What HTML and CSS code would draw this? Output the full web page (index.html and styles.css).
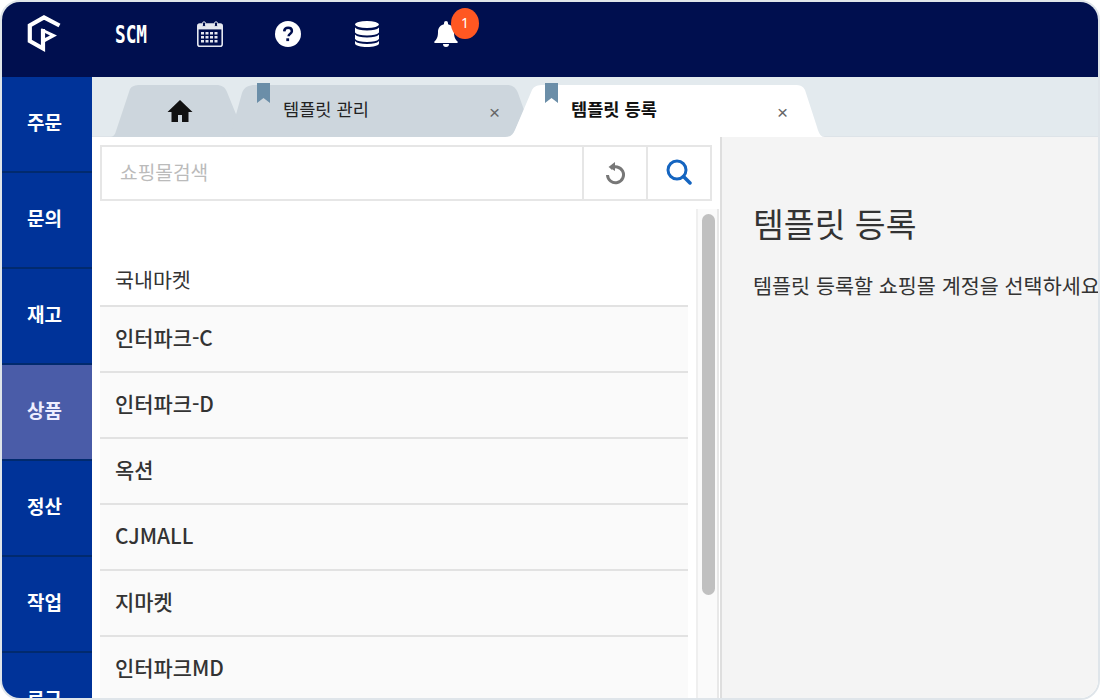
FILE: index.html
```html
<!DOCTYPE html>
<html lang="ko">
<head>
<meta charset="utf-8">
<title>템플릿 등록</title>
<link rel="stylesheet" href="styles.css">
</head>
<body>
<div class="app">
  <header class="topbar">
    <svg class="logo" viewBox="0 0 36 38" width="36" height="38"><path d="M33.500 10.500 18 2.500 3.800 10.500V26L17 33.500V14" fill="none" stroke="#fff" stroke-width="4.200"/><path d="M15 13 31 20.500 19 27V23l5-2.500-5-2.500z" fill="#fff"/></svg>
    <span class="scm">SCM</span>
    <svg class="ic-cal" viewBox="0 0 26 26" width="26" height="26"><rect x="0.800" y="3" width="24.400" height="22.200" rx="2" fill="none" stroke="#e4e7f0" stroke-width="1.600"/><rect x="1" y="3" width="24" height="5.400" fill="#e4e7f0"/><rect x="5.500" y="0.800" width="3" height="5" rx="1.500" fill="#000f4f" stroke="#e4e7f0"/><rect x="17.500" y="0.800" width="3" height="5" rx="1.500" fill="#000f4f" stroke="#e4e7f0"/><path d="M4 11h3v2.400H4zM8.500 11h3v2.400h-3zM13 11h3v2.400h-3zM17.500 11h3v2.400h-3zM4 15h3v2.400H4zM8.500 15h3v2.400h-3zM13 15h3v2.400h-3zM17.500 15h3v2.400h-3zM4 19h3v2.400H4zM8.500 19h3v2.400h-3zM13 19h3v2.400h-3zM17.500 19h3v2.400h-3z" fill="#e4e7f0"/></svg>
    <svg class="ic-help" viewBox="0 0 26 26" width="26" height="26"><circle cx="13" cy="13" r="13" fill="#fff"/><path d="M9.200 10.300c.2-2.200 1.800-3.500 3.900-3.500 2.200 0 3.800 1.300 3.800 3.200 0 1.500-.9 2.300-1.900 3-1 .7-1.400 1.100-1.400 2.300" fill="none" stroke="#000f4f" stroke-width="2.500"/><rect x="11.300" y="17.300" width="2.800" height="2.800" fill="#000f4f"/></svg>
    <svg class="ic-db" viewBox="0 0 24 26" width="24" height="26"><ellipse cx="12" cy="3.500" rx="12" ry="3.500" fill="#fff"/><path d="M0 6.500c2 2.200 6 3 12 3s10-.8 12-3v5c-2 2.200-6 3-12 3s-10-.8-12-3zM0 13.500c2 2.200 6 3 12 3s10-.8 12-3v4.500c-2 2.200-6 3-12 3s-10-.8-12-3z" fill="#fff"/><path d="M0 20c2 2.200 6 3 12 3s10-.8 12-3v2.500c0 2-6 3.500-12 3.500s-12-1.500-12-3.500z" fill="#fff"/></svg>
    <div class="bell">
      <svg viewBox="0 0 24 26" width="24" height="26"><path d="M12 0a2 2 0 0 1 2 2v1.200c3.800.8 6 3.800 6 7.800 0 5.500 1.500 7.500 3.500 9.500.6.600.3 1.500-.6 1.500H1.100c-.9 0-1.200-.9-.6-1.500C2.500 18.500 4 16.500 4 11c0-4 2.200-7 6-7.800V2a2 2 0 0 1 2-2zM9 23h6a3 3 0 0 1-6 0z" fill="#fff"/></svg>
      <span class="badge">1</span>
    </div>
  </header>
  <div class="body">
    <nav class="side">
      <a class="side-item">주문</a>
      <a class="side-item">문의</a>
      <a class="side-item">재고</a>
      <a class="side-item active">상품</a>
      <a class="side-item">정산</a>
      <a class="side-item">작업</a>
      <a class="side-item">로그</a>
    </nav>
    <div class="content">
      <div class="tabs">
        <div class="tab tab-home">
          <svg class="tab-bg" viewBox="0 0 132 60" preserveAspectRatio="none"><path d="M0 60C3 60 5 58 6 54L20 12C22 9 25 8 30 8H106C112 8 115 10 117 15L132 52V60Z" fill="#cdd6dd"/></svg>
          <svg class="home-ic" viewBox="0 0 26 24" width="26" height="24"><path d="M13 1 .500 13H4.500v10h6.500v-7h4v7h6.500V13h4z" fill="#111"/></svg>
        </div>
        <div class="tab tab-mid">
          <svg class="tab-bg" viewBox="0 0 302 60" preserveAspectRatio="none"><path d="M0 60C6 60 8 57 10 52L20 16C22 10 27 8 33 8H285C291 8 294 11 296 16L302 33 290 60Z" fill="#cdd6dd"/></svg>
          <svg class="mark" viewBox="0 0 13 20" width="13" height="20"><path d="M0 0h13v20l-6.500-5L0 20z" fill="#6b8ea8"/></svg>
          <span class="tab-label">템플릿 관리</span>
          <span class="tab-x">×</span>
        </div>
        <div class="tab tab-cur">
          <svg class="tab-bg" viewBox="0 0 320 60" preserveAspectRatio="none"><path d="M0 60C5 60 8 58 10 53L27 13C29 9 33 8 38 8H290C295 8 298 9 300 13L312 50C314 57 316 60 320 60Z" fill="#fff"/></svg>
          <svg class="mark" viewBox="0 0 13 20" width="13" height="20"><path d="M0 0h13v20l-6.500-5L0 20z" fill="#6b8ea8"/></svg>
          <span class="tab-label">템플릿 등록</span>
          <span class="tab-x">×</span>
        </div>
      </div>
      <div class="panes">
        <section class="left">
          <div class="search">
            <div class="search-input">쇼핑몰검색</div>
            <button class="search-btn">
              <svg viewBox="0 0 22 24" width="22" height="24"><path d="M6.500 7.500A8 8 0 1 1 3.500 14" fill="none" stroke="#777" stroke-width="3"/><path d="M11 1v9L4.500 6z" fill="#777"/></svg>
            </button>
            <button class="search-btn">
              <svg viewBox="0 0 26 26" width="26" height="26"><circle cx="11" cy="11" r="9" fill="none" stroke="#1565c0" stroke-width="3"/><path d="M17.500 17.500 24 24" stroke="#1565c0" stroke-width="3.500" stroke-linecap="round"/></svg>
            </button>
          </div>
          <div class="list-wrap">
            <div class="list">
              <div class="group">국내마켓</div>
              <div class="item">인터파크-C</div>
              <div class="item">인터파크-D</div>
              <div class="item">옥션</div>
              <div class="item">CJMALL</div>
              <div class="item">지마켓</div>
              <div class="item">인터파크MD</div>
            </div>
            <div class="track"><div class="thumb"></div></div>
          </div>
        </section>
        <section class="right">
          <h1 class="title">템플릿 등록</h1>
          <p class="desc">템플릿 등록할 쇼핑몰 계정을 선택하세요</p>
        </section>
      </div>
    </div>
  </div>
</div>
</body>
</html>
```
FILE: styles.css
```css
* { box-sizing: border-box; }
html, body { margin: 0; height: 100%; background: #fff; overflow: hidden; }
body { font-family: "Noto Sans CJK KR", "Noto Sans", sans-serif; }
.app {
  width: 1100px; height: 700px;
  border: 2px solid #dfe5ea; border-radius: 20px;
  overflow: hidden; display: flex; flex-direction: column;
  background: #e3eaee;
}
.topbar {
  height: 75px; flex: none; background: #000f4f;
  display: flex; align-items: center; position: relative;
  padding-left: 24px; padding-bottom: 11px;
}
.logo { flex: none; }
.scm {
  margin-left: 53px; width: 36px; color: #fff; font: 700 25px/1 "DejaVu Sans Mono", monospace;
  transform: scaleX(.71); transform-origin: left center; white-space: nowrap;
}
.ic-cal { margin-left: 46px; }
.ic-help { margin-left: 52px; }
.ic-db { margin-left: 54px; }
.bell { margin-left: 55px; position: relative; height: 26px; }
.badge {
  position: absolute; left: 17px; top: -13px; width: 28px; height: 31px; border-radius: 50%;
  background: #ff5722; color: #fff; font-size: 14px; line-height: 29px; text-align: center;
  font-family: "Noto Sans", sans-serif;
}
.body { flex: 1; display: flex; min-height: 0; }
.side { width: 90px; flex: none; background: #003399; overflow: hidden; }
.side-item {
  display: flex; align-items: center; justify-content: center;
  height: 96px; color: #fff; font-size: 19px; font-weight: 700;
  border-bottom: 2px solid #012a6e; padding: 0 5px 6px 0;
}
.side-item.active { background: #4a5ca8; color: #eef; }
.content { flex: 1; display: flex; flex-direction: column; min-width: 0; }
.tabs { height: 60px; flex: none; display: flex; padding-left: 18px; border-bottom: 1px solid #dde3e8; }
.tab { position: relative; height: 60px; flex: none; }
.tab-bg { position: absolute; inset: 0; width: 100%; height: 100%; }
.tab-home { width: 132px; display: flex; justify-content: center; padding-left: 8px; }
.home-ic { position: relative; top: 22px; }
.tab-mid { width: 302px; margin-left: -20px; }
.tab-cur { width: 320px; margin-left: -19px; }
.mark { position: absolute; left: 35px; top: 6px; }
.tab-label {
  position: absolute; left: 61px; top: 20px; font-size: 17.600px; line-height: 24px; color: #222; white-space: nowrap;
}
.tab-cur .tab-label { left: 66px; font-weight: 700; color: #111; }
.tab-cur .mark { left: 40px; }
.tab-x { position: absolute; right: 24px; top: 25px; font: 19px/22px "Liberation Sans", sans-serif; color: #666; }
.tab-cur .tab-x { right: 37px; }
.panes { flex: 1; display: flex; min-height: 0; background: #fff; }
.left { width: 628px; flex: none; padding: 8px 8px 0; display: flex; flex-direction: column; min-height: 0; }
.search { height: 56px; flex: none; display: flex; border: 2px solid #e6e6e6; width: 612px; }
.search-input { flex: 1; color: #bbb; font-size: 19.200px; padding: 0 18px; line-height: 50px; }
.search-btn {
  width: 64px; flex: none; border: 0; border-left: 2px solid #e6e6e6; background: #fff;
  display: flex; align-items: center; justify-content: center; padding: 0;
}
.search-btn + .search-btn svg { margin-top: -2px; }
.list-wrap { flex: 1; display: flex; min-height: 0; overflow: hidden; margin-top: 8px; margin-right: -7px; }
.list { width: 588px; flex: none; }
.group {
  height: 98px; background: #fff; border-bottom: 2px solid #e2e2e2;
  font-size: 20.600px; color: #333; padding: 54px 15px 0; line-height: 32px;
}
.item {
  height: 66px; background: #fafafa; border-bottom: 2px solid #e2e2e2; color: #333;
  font-size: 20.900px; font-weight: 500; padding-left: 15px; line-height: 60px;
}
.track {
  margin-left: 8px; width: 23px; background: #fafafa;
  border-left: 2px solid #efefef; border-right: 2px solid #e8e8e8; padding: 5px 3px 0 4px;
}
.thumb { width: 13px; height: 381px; background: #c0c0c0; border-radius: 7px; }
.right { flex: 1; background: #f4f4f4; border-left: 2px solid #dedede; padding: 0 0 0 31px; white-space: nowrap; overflow: hidden; }
.title { margin: 63px 0 0; font-size: 33.500px; font-weight: 400; line-height: 46px; color: #333; }
.desc { margin: 24px 0 0; font-size: 20.700px; line-height: 30px; color: #333; }
```
